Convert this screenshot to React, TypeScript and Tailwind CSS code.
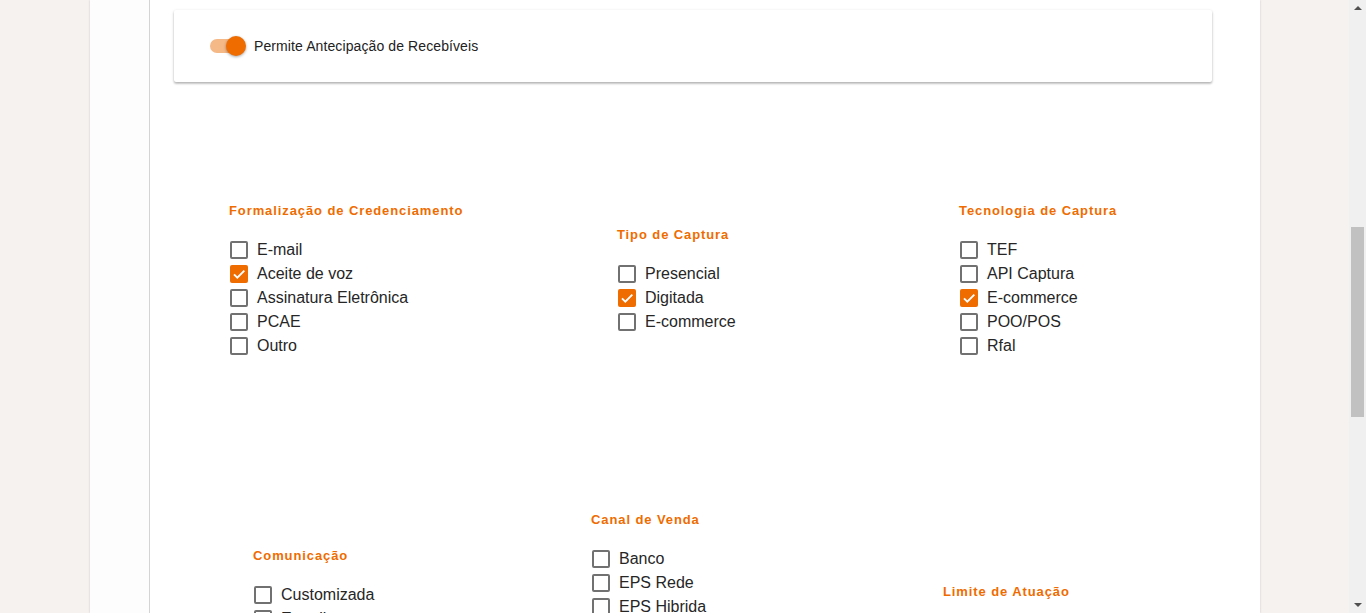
// ================== IMPORTS
import type { ReactNode } from "react";

// ================== TYPES
type Option = { label: string; checked?: boolean };

type GroupProps = {
	title: string;
	options: Option[];
	className?: string;
};

// ================== DATA
const formalizacao: Option[] = [
	{ label: "E-mail" },
	{ label: "Aceite de voz", checked: true },
	{ label: "Assinatura Eletrônica" },
	{ label: "PCAE" },
	{ label: "Outro" },
];

const tipoCaptura: Option[] = [
	{ label: "Presencial" },
	{ label: "Digitada", checked: true },
	{ label: "E-commerce" },
];

const tecnologia: Option[] = [
	{ label: "TEF" },
	{ label: "API Captura" },
	{ label: "E-commerce", checked: true },
	{ label: "POO/POS" },
	{ label: "Rfal" },
];

const comunicacao: Option[] = [
	{ label: "Customizada" },
	{ label: "E-mail" },
	{ label: "SMS" },
	{ label: "Outro" },
];

const canalVenda: Option[] = [
	{ label: "Banco" },
	{ label: "EPS Rede" },
	{ label: "EPS Hibrida" },
	{ label: "Parceiro" },
	{ label: "Loja" },
	{ label: "Telefone" },
	{ label: "Outro" },
];

const limite: Option[] = [{ label: "Nacional" }];

// ================== CHECKBOX
const Checkbox = ({ label, checked }: Option) => (
	<label className="ml-[1px] flex h-6 shrink-0 items-center gap-[9px] cursor-pointer">
		<span
			className={
				checked
					? "flex h-[18px] w-[18px] shrink-0 items-center justify-center rounded-[2px] bg-[#ef6c00]"
					: "h-[18px] w-[18px] shrink-0 rounded-[2px] border-2 border-[#717171] bg-white"
			}
		>
			{checked && (
				<svg viewBox="0 0 24 24" className="h-[16px] w-[16px]">
					<path
						d="M4.5 12.5l5 5L20 7"
						fill="none"
						stroke="#fff"
						strokeWidth="2.8"
					/>
				</svg>
			)}
		</span>
		<span className="whitespace-nowrap text-[16px] leading-6 text-[#262626]">{label}</span>
	</label>
);

// ================== GROUP
const Group = ({ title, options, className = "" }: GroupProps) => (
	<div className={`flex shrink-0 flex-col ${className}`}>
		<h4 className="mb-[19px] h-4 shrink-0 whitespace-nowrap text-[13px] font-bold leading-4 tracking-[0.9px] text-[#ef6c00]">
			{title}
		</h4>
		<div className="flex shrink-0 flex-col">
			{options.map((o) => (
				<Checkbox key={o.label} {...o} />
			))}
		</div>
	</div>
);

// ================== ROW
const Row = ({ children, className = "" }: { children: ReactNode; className?: string }) => (
	<div className={`flex shrink-0 items-center ${className}`}>{children}</div>
);

// ================== APP
const App = () => {
	return (
		<div className="flex h-[613px] w-full overflow-hidden bg-[#f5f2ef] font-['Liberation_Sans',Arial,sans-serif]">
			{/* ============================== PANEL */}
			<div className="ml-[90px] flex h-full w-[1170px] shrink-0 bg-white shadow-[0_0_2px_rgba(0,0,0,0.18)]">
				<div className="h-full w-[60px] shrink-0 border-r border-[#d4d4d4] bg-[#fdfdfd]" />

				<div className="flex h-full flex-1 flex-col overflow-hidden">
					{/* =========================== TOGGLE CARD */}
					<div className="ml-[24px] mt-[10px] flex h-[72px] w-[1038px] shrink-0 items-center rounded-[2px] bg-white pl-[36px] shadow-[0_1px_3px_rgba(0,0,0,0.22),0_2px_2px_rgba(0,0,0,0.14)]">
						<div className="relative h-[20px] w-[36px]">
							<div className="absolute left-0 top-[3px] h-[14px] w-[34px] rounded-full bg-[#f5b887]" />
							<div className="absolute left-[16px] top-0 h-[20px] w-[20px] rounded-full bg-[#ef6c00] shadow-[0_1px_3px_rgba(0,0,0,0.35)]" />
						</div>
						<span className="ml-[8px] text-[14px] tracking-[0.1px] text-[#222]">
							Permite Antecipação de Recebíveis
						</span>
					</div>

					{/* =========================== ROW 1 */}
					<Row className="mt-[121px]">
						<Group title="Formalização de Credenciamento" options={formalizacao} className="ml-[79px] w-[388px]" />
						<Group title="Tipo de Captura" options={tipoCaptura} className="w-[342px]" />
						<Group title="Tecnologia de Captura" options={tecnologia} />
					</Row>

					{/* =========================== ROW 2 */}
					<Row className="mt-[154px]">
						<Group title="Comunicação" options={comunicacao} className="ml-[103px] w-[338px]" />
						<Group title="Canal de Venda" options={canalVenda} className="w-[352px]" />
						<Group title="Limite de Atuação" options={limite} />
					</Row>
				</div>
			</div>

			<div className="flex-1" />

			{/* ============================== SCROLLBAR */}
			<div className="relative h-full w-[17px] shrink-0 bg-[#f0f0f0]">
				<div className="absolute left-[5px] top-[6px] h-0 w-0 border-x-[4px] border-b-[4px] border-x-transparent border-b-[#505050]" />
				<div className="absolute left-[2px] top-[227px] h-[190px] w-[13px] bg-[#c1c1c1]" />
				<div className="absolute bottom-[6px] left-[5px] h-0 w-0 border-x-[4px] border-t-[4px] border-x-transparent border-t-[#505050]" />
			</div>
		</div>
	);
};

export default App;
